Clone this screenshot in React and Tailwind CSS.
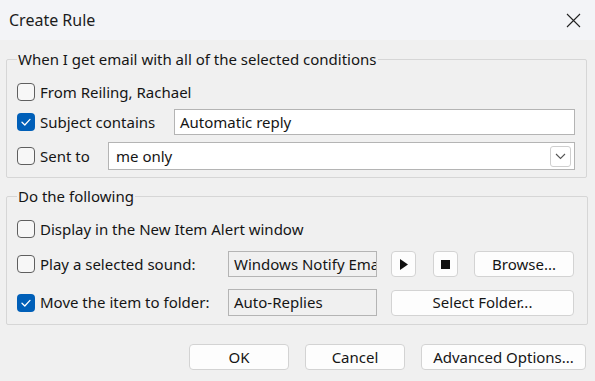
import React from 'react'

const font = { fontFamily: '"Noto Sans", "Open Sans", Arial, sans-serif' }

function Check({ checked, label }) {
  return (
    <div className="flex items-center gap-[5px] shrink-0">
      {checked ? (
        <span className="w-[18px] h-[18px] rounded-[4px] bg-[#005fb8] flex items-center justify-center">
          <svg width="12" height="12" viewBox="0 0 12 12" fill="none">
            <path d="M2 6.3 L4.8 9 L10 3.4" stroke="white" strokeWidth="1.3" strokeLinecap="round" strokeLinejoin="round" />
          </svg>
        </span>
      ) : (
        <span className="w-[18px] h-[18px] rounded-[4px] border border-[#5f5f5f] bg-[#f7f7f7]" />
      )}
      <span>{label}</span>
    </div>
  )
}

function Btn({ className, children }) {
  return (
    <div className={`h-[26px] bg-[#fdfdfd] border border-[#d3d3d3] rounded-[4px] flex items-center justify-center ${className}`}>
      {children}
    </div>
  )
}

export default function App() {
  return (
    <div style={font} className="w-[595px] h-[381px] bg-[#f0f0f0] text-[15px] text-[#151515] overflow-hidden">
      <div className="h-[40px] bg-[#f3f4f7] flex items-center justify-between pl-[9px] pr-[14px]">
        <span className="text-[16px] text-[#1c1c1c]">Create Rule</span>
        <svg width="15" height="15" viewBox="0 0 15 15">
          <path d="M1 1 L14 14 M14 1 L1 14" stroke="#222" strokeWidth="1.1" />
        </svg>
      </div>

      <div className="px-[6px] pr-[8px] pt-[9px]">
        <fieldset className="border border-[#d6d6d6] rounded-[2px] pl-[10px] pr-[11px] pb-[7px]">
          <legend className="px-[1px] leading-[20px]">When I get email with all of the selected conditions</legend>
          <div className="h-[26px] mt-[10px] flex items-center">
            <Check label="From Reiling, Rachael" />
          </div>
          <div className="h-[26px] mt-[4px] flex items-center">
            <div className="w-[157px]"><Check checked label="Subject contains" /></div>
            <div className="flex-1 h-[26px] bg-white border border-[#b4b4b4] flex items-center px-[5px]">Automatic reply</div>
          </div>
          <div className="h-[28px] mt-[7px] flex items-center">
            <div className="w-[91px]"><Check label="Sent to" /></div>
            <div className="flex-1 h-[28px] bg-white border border-[#b4b4b4] flex items-center justify-between pl-[7px] pr-[3px]">
              <span>me only</span>
              <span className="w-[21px] h-[21px] border border-[#cfcfcf] rounded-[3px] bg-white flex items-center justify-center">
                <svg width="11" height="7" viewBox="0 0 11 7" fill="none">
                  <path d="M1 1 L5.5 5.5 L10 1" stroke="#555" strokeWidth="1.1" />
                </svg>
              </span>
            </div>
          </div>
        </fieldset>

        <fieldset className="mt-[8px] border border-[#d6d6d6] rounded-[2px] pl-[10px] pr-[13px] pb-[8px]">
          <legend className="px-[1px] leading-[20px]">Do the following</legend>
          <div className="h-[26px] mt-[10px] flex items-center">
            <Check label="Display in the New Item Alert window" />
          </div>
          <div className="h-[26px] mt-[9px] flex items-center">
            <div className="w-[211px]"><Check label="Play a selected sound:" /></div>
            <div className="w-[149px] h-[26px] border border-[#b4b4b4] flex items-center pl-[5px] overflow-hidden whitespace-nowrap">Windows Notify Email</div>
            <Btn className="w-[25px] ml-[14px]">
              <svg width="8" height="11" viewBox="0 0 8 11"><path d="M0 0 L8 5.5 L0 11 Z" fill="#111" /></svg>
            </Btn>
            <Btn className="w-[25px] ml-[17px]">
              <span className="w-[9px] h-[9px] bg-[#111]" />
            </Btn>
            <Btn className="w-[100px] ml-[16px]">Browse...</Btn>
          </div>
          <div className="h-[27px] mt-[12px] flex items-center">
            <div className="w-[211px]"><Check checked label="Move the item to folder:" /></div>
            <div className="w-[149px] h-[27px] border border-[#b4b4b4] flex items-center px-[5px]">Auto-Replies</div>
            <Btn className="flex-1 ml-[14px]">Select Folder...</Btn>
          </div>
        </fieldset>

        <div className="mt-[19px] flex justify-end gap-[16px] pr-[1px]">
          <Btn className="w-[100px]">OK</Btn>
          <Btn className="w-[100px]">Cancel</Btn>
          <Btn className="w-[165px]">Advanced Options...</Btn>
        </div>
      </div>
    </div>
  )
}
